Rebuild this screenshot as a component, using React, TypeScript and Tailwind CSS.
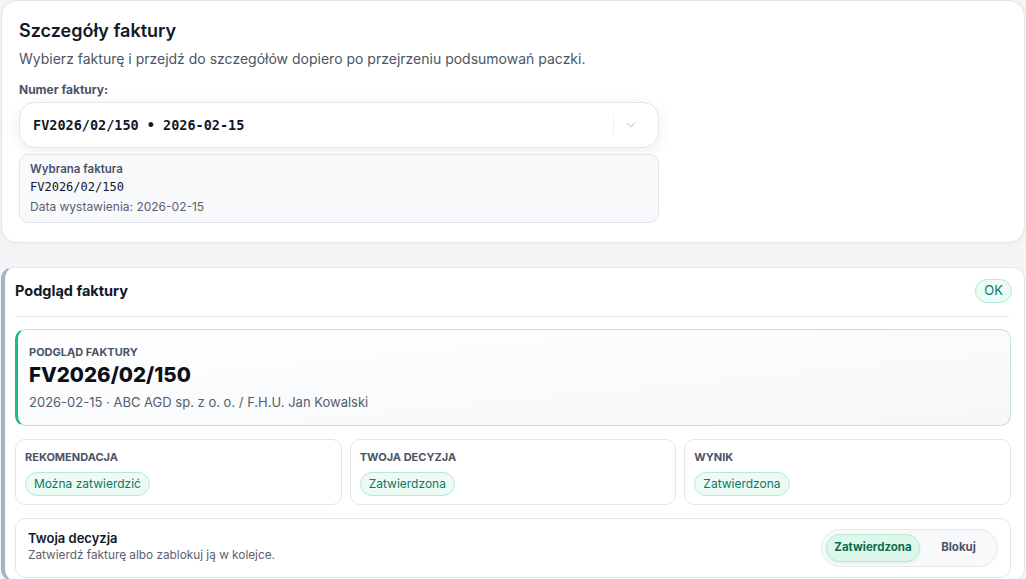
import { ChevronDown } from 'lucide-react'

const sans = { fontFamily: 'Inter, "Noto Sans", sans-serif' }
const mono = { fontFamily: '"DejaVu Sans Mono", monospace' }

function Pill({ children }: { children: React.ReactNode }) {
  return (
    <span className="inline-flex items-center h-[24px] px-[8px] rounded-full border border-[#b5ebd6] bg-[#ecfbf4] text-[12px] text-[#0f766e]">
      {children}
    </span>
  )
}

function StatCard({ label, value }: { label: string; value: string }) {
  return (
    <div className="flex-1 rounded-[10px] border border-[#e3e6ee] bg-white px-[9px] pt-[10px] pb-[8px]">
      <div className="text-[11px] font-bold uppercase text-[#4b5368] leading-[14px]">{label}</div>
      <div className="mt-[8px] flex">
        <Pill>{value}</Pill>
      </div>
    </div>
  )
}

export default function App() {
  return (
    <div className="min-h-[579px] bg-[#f4f5f6] px-px text-[#111827]" style={sans}>
      {/* wybór faktury */}
      <section className="rounded-[16px] border border-[#e2e5ea] bg-white px-[17px] pt-[16px] pb-[19px] shadow-[0_2px_8px_rgba(0,0,0,0.03)]">
        <h2 className="text-[18px] font-semibold leading-[28px] text-[#111827]">Szczegóły faktury</h2>
        <p className="mt-[3px] text-[14px] leading-[22px] text-[#4b5563]">
          Wybierz fakturę i przejdź do szczegółów dopiero po przejrzeniu podsumowań paczki.
        </p>
        <div className="mt-[12px] text-[12px] font-bold leading-[16px] text-[#4b5368]">Numer faktury:</div>
        <div className="mt-[4px] w-[640px]">
          <div className="flex h-[46px] items-center rounded-[16px] border border-[#e3e5ef] bg-white pl-[13px] pr-[20px] shadow-[0_4px_16px_rgba(15,23,42,0.07)]">
            <span className="flex-1 text-[13.5px] font-bold text-[#111827]" style={mono}>
              FV2026/02/150 • 2026-02-15
            </span>
            <span className="h-[18px] w-px bg-[#eef0f4]" />
            <ChevronDown className="ml-[10px] h-[14px] w-[14px] text-[#d4d7df]" />
          </div>
          <div className="mt-[6px] rounded-[9px] border border-[#e1e4ee] bg-[#f8f9fb] px-[10px] pt-[6px] pb-[6px]">
            <div className="text-[11.5px] font-semibold leading-[16px] text-[#4b5368]">Wybrana faktura</div>
            <div className="mt-[1px] text-[12px] leading-[18px] text-[#111827]" style={mono}>
              FV2026/02/150
            </div>
            <div className="mt-[2px] text-[12px] leading-[18px] text-[#5b6170]">Data wystawienia: 2026-02-15</div>
          </div>
        </div>
      </section>

      {/* podgląd */}
      <section className="mt-[24px] rounded-[12px] border border-[#e3e6ec] border-l-[4px] border-l-[#a7b0c4] bg-white pl-[10px] pr-[13px] pt-[11px] pb-[2px]">
        <div className="flex items-center justify-between pb-[13px]">
          <h3 className="text-[14.5px] font-bold leading-[22px] text-[#111827]">Podgląd faktury</h3>
          <span className="-mr-px flex h-[24px] items-center rounded-full border border-[#b5ebd6] bg-[#ecfbf4] px-[8px] text-[13px] text-[#0f766e]">
            OK
          </span>
        </div>
        <div className="mr-[2px] h-px bg-[#e4e9f0]" />

        <div className="mt-[12px] rounded-[10px] border border-[#b9ead6] border-l-[3px] border-l-[#1cb98a] bg-gradient-to-br from-white to-[#f5f7f9] px-[11px] pt-[15px] pb-[13px]">
          <div className="text-[11px] font-bold uppercase leading-[14px] text-[#4b5368]">Podgląd faktury</div>
          <div className="mt-[2px] text-[20.5px] font-extrabold leading-[28px] text-[#0b0f19]">FV2026/02/150</div>
          <div className="mt-[3px] text-[13px] leading-[20px] text-[#565d6b]">
            2026-02-15 · ABC AGD sp. z o. o. / F.H.U. Jan Kowalski
          </div>
        </div>

        <div className="mt-[13px] flex gap-[8px]">
          <StatCard label="Rekomendacja" value="Można zatwierdzić" />
          <StatCard label="Twoja decyzja" value="Zatwierdzona" />
          <StatCard label="Wynik" value="Zatwierdzona" />
        </div>

        <div className="mt-[13px] flex items-center rounded-[10px] border border-[#e3e6ee] bg-white py-[10px] pl-[12px] pr-[12px]">
          <div className="-mt-[4px] flex-1">
            <div className="text-[13px] font-semibold leading-[17px] text-[#111827]">Twoja decyzja</div>
            <div className="text-[11.8px] leading-[16px] text-[#5b6170]">Zatwierdź fakturę albo zablokuj ją w kolejce.</div>
          </div>
          <div className="flex items-center gap-[4px] rounded-full border border-[#e6e8ef] bg-[#f8f9fb] p-[4px]">
            <button className="h-[28px] w-[94px] rounded-full border border-[#b9ead0] bg-[#ddf8ea] text-[11.5px] font-bold text-[#0b6b4f] shadow-[0_1px_3px_rgba(0,0,0,0.08)]">
              Zatwierdzona
            </button>
            <button className="h-[28px] w-[69px] rounded-full text-[11.5px] font-bold text-[#4b5368]">Blokuj</button>
          </div>
        </div>
      </section>
    </div>
  )
}
